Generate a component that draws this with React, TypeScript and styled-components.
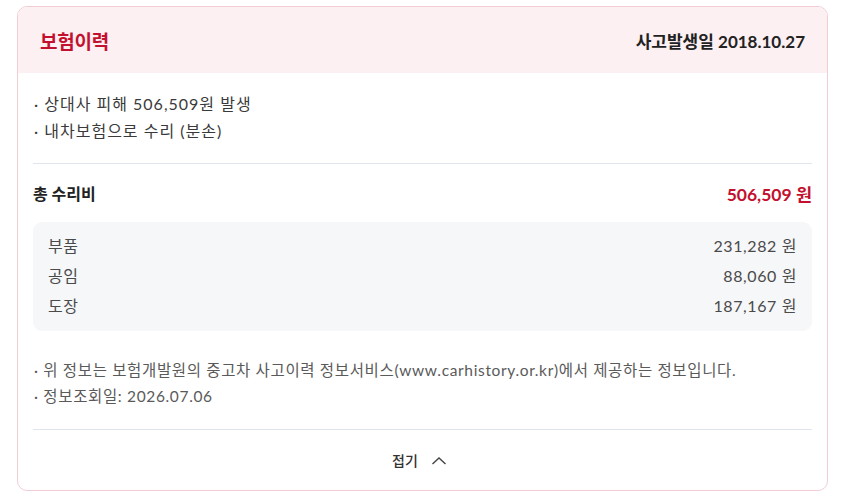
import styled, { createGlobalStyle } from "styled-components";

const GlobalStyle = createGlobalStyle`
  body {
    margin: 0;
    background: #ffffff;
    font-family: "Lato", "Noto Sans CJK KR", sans-serif;
  }
`;

const Page = styled.div`
  padding: 6px 18px 0 17px;
`;

const Card = styled.section`
  width: 811px;
  box-sizing: border-box;
  border: 1.5px solid #f3cdd4;
  border-radius: 10px;
  overflow: hidden;
  background: #fff;
`;

const Header = styled.header`
  display: flex;
  align-items: center;
  justify-content: space-between;
  height: 66px;
  padding: 0 22px;
  background: #fcf0f2;
`;

const Title = styled.h2`
  margin: 0;
  font-size: 19px;
  font-weight: 700;
  color: #c4102f;
  letter-spacing: -0.2px;
`;

const AccidentDate = styled.span`
  font-size: 17px;
  font-weight: 700;
  color: #222;
`;

const Body = styled.div`
  padding: 0 15px;
`;

const Bullets = styled.ul<{ small?: boolean }>`
  list-style: none;
  margin: 0;
  padding: ${({ small }) => (small ? "26px 1px 20px" : "17px 1px 19px")};
  border-bottom: 1px solid #dfe5ee;
  color: ${({ small }) => (small ? "#5a5a5a" : "#3a3a3a")};
  font-size: ${({ small }) => (small ? "15.5px" : "16px")};
  line-height: ${({ small }) => (small ? "26px" : "27px")};
  letter-spacing: ${({ small }) => (small ? "0.65px" : "1px")};
`;

const Bullet = styled.li`
  &::before {
    content: "· ";
  }
`;

const TotalRow = styled.div`
  display: flex;
  justify-content: space-between;
  align-items: center;
  height: 58px;
  font-weight: 700;
`;

const TotalLabel = styled.span`
  font-size: 16px;
  color: #222;
`;

const TotalValue = styled.span`
  font-size: 17.5px;
  color: #c4102f;
`;

const CostBox = styled.div`
  display: flex;
  flex-direction: column;
  padding: 9px 15px 10px;
  border-radius: 9px;
  background: #f6f7f9;
`;

const CostRow = styled.div`
  display: flex;
  justify-content: space-between;
  line-height: 30px;
  font-size: 16px;
  letter-spacing: 0.6px;
  color: #4a4a4a;
`;

const Toggle = styled.button`
  display: flex;
  align-items: center;
  justify-content: center;
  gap: 13px;
  width: 100%;
  height: 60px;
  padding: 0 6px 0 0;
  border: none;
  background: none;
  font-family: inherit;
  font-size: 14px;
  font-weight: 500;
  color: #333;
  cursor: pointer;
`;

const costs = [
  { label: "부품", value: "231,282 원" },
  { label: "공임", value: "88,060 원" },
  { label: "도장", value: "187,167 원" },
];

export default function App() {
  return (
    <Page>
      <GlobalStyle />
      <Card>
        <Header>
          <Title>보험이력</Title>
          <AccidentDate>사고발생일 2018.10.27</AccidentDate>
        </Header>
        <Body>
          <Bullets>
            <Bullet>상대사 피해 506,509원 발생</Bullet>
            <Bullet>내차보험으로 수리 (분손)</Bullet>
          </Bullets>
          <TotalRow>
            <TotalLabel>총 수리비</TotalLabel>
            <TotalValue>506,509 원</TotalValue>
          </TotalRow>
          <CostBox>
            {costs.map((c) => (
              <CostRow key={c.label}>
                <span>{c.label}</span>
                <span>{c.value}</span>
              </CostRow>
            ))}
          </CostBox>
          <Bullets small>
            <Bullet>
              위 정보는 보험개발원의 중고차 사고이력 정보서비스(www.carhistory.or.kr)에서 제공하는 정보입니다.
            </Bullet>
            <Bullet>정보조회일: 2026.07.06</Bullet>
          </Bullets>
          <Toggle>
            접기
            <svg width="16" height="9" viewBox="0 0 16 9" fill="none">
              <path d="M1.5 8 L8 2 L14.5 8" stroke="#444" strokeWidth="1.4" />
            </svg>
          </Toggle>
        </Body>
      </Card>
    </Page>
  );
}
